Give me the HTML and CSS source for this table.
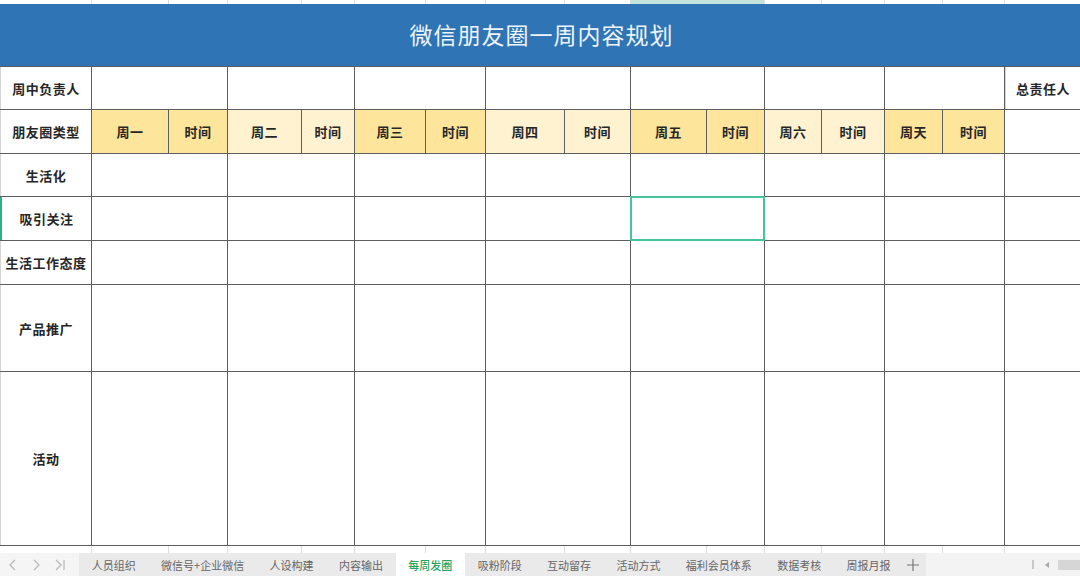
FILE: index.html
```html
<!DOCTYPE html>
<html lang="zh">
<head>
<meta charset="utf-8">
<title>微信朋友圈一周内容规划</title>
<link rel="stylesheet" href="styles.css">
</head>
<body>
<div class="sheet">
  <div class="strip top">
    <span></span><span></span><span></span><span></span><span></span><span></span><span></span><span></span><span></span><span class="hl"></span><span></span><span></span><span></span><span></span><span></span>
  </div>
  <div class="title">微信朋友圈一周内容规划</div>
  <div class="grid">
    <div class="c label r1">周中负责人</div>
    <div class="c span"></div><div class="c span"></div><div class="c span"></div><div class="c span"></div><div class="c span"></div><div class="c span"></div><div class="c span"></div>
    <div class="c label">总责任人</div>

    <div class="c label">朋友圈类型</div>
    <div class="c day odd">周一</div><div class="c day odd">时间</div>
    <div class="c day even">周二</div><div class="c day even">时间</div>
    <div class="c day odd">周三</div><div class="c day odd">时间</div>
    <div class="c day even">周四</div><div class="c day even">时间</div>
    <div class="c day odd">周五</div><div class="c day odd">时间</div>
    <div class="c day even">周六</div><div class="c day even">时间</div>
    <div class="c day odd">周天</div><div class="c day odd">时间</div>
    <div class="c"></div>

    <div class="c label">生活化</div>
    <div class="c span"></div><div class="c span"></div><div class="c span"></div><div class="c span"></div><div class="c span"></div><div class="c span"></div><div class="c span"></div>
    <div class="c"></div>

    <div class="c label active">吸引关注</div>
    <div class="c span"></div><div class="c span"></div><div class="c span"></div><div class="c span"></div><div class="c span selected"></div><div class="c span"></div><div class="c span"></div>
    <div class="c"></div>

    <div class="c label">生活工作态度</div>
    <div class="c span"></div><div class="c span"></div><div class="c span"></div><div class="c span"></div><div class="c span"></div><div class="c span"></div><div class="c span"></div>
    <div class="c"></div>

    <div class="c label">产品推广</div>
    <div class="c span"></div><div class="c span"></div><div class="c span"></div><div class="c span"></div><div class="c span"></div><div class="c span"></div><div class="c span"></div>
    <div class="c"></div>

    <div class="c label">活动</div>
    <div class="c span"></div><div class="c span"></div><div class="c span"></div><div class="c span"></div><div class="c span"></div><div class="c span"></div><div class="c span"></div>
    <div class="c"></div>
  </div>
  <div class="strip bottom">
    <span></span><span></span><span></span><span></span><span></span><span></span><span></span><span></span><span></span><span></span><span></span><span></span><span></span><span></span><span></span><span></span>
  </div>
  <div class="tabbar">
    <div class="nav">
      <svg width="10" height="12" viewBox="0 0 10 12"><path d="M7 1 L2 6 L7 11" fill="none" stroke="#b8b8b8" stroke-width="1.2"/></svg>
      <svg width="10" height="12" viewBox="0 0 10 12"><path d="M3 1 L8 6 L3 11" fill="none" stroke="#b8b8b8" stroke-width="1.2"/></svg>
      <svg width="12" height="12" viewBox="0 0 12 12"><path d="M2 1 L7 6 L2 11 M10 1 V11" fill="none" stroke="#b8b8b8" stroke-width="1.2"/></svg>
    </div>
    <div class="tabs">
      <span class="tab">人员组织</span>
      <span class="tab">微信号+企业微信</span>
      <span class="tab">人设构建</span>
      <span class="tab">内容输出</span>
      <span class="tab current">每周发圈</span>
      <span class="tab">吸粉阶段</span>
      <span class="tab">互动留存</span>
      <span class="tab">活动方式</span>
      <span class="tab">福利会员体系</span>
      <span class="tab">数据考核</span>
      <span class="tab">周报月报</span>
      <span class="add">
        <svg width="14" height="14" viewBox="0 0 14 14"><path d="M7 1 V13 M1 7 H13" stroke="#777" stroke-width="1.2"/></svg>
      </span>
    </div>
    <div class="scroll">
      <span class="split"></span>
      <svg width="6" height="8" viewBox="0 0 6 8"><path d="M5 1 L1 4 L5 7 Z" fill="#a8a8a8"/></svg>
      <span class="thumb"></span>
    </div>
  </div>
</div>
</body>
</html>
```

FILE: styles.css
```css
:root {
  --cols: 91px 76px 58px 73px 52px 70px 59px 78px 65px 75px 57px 56px 62px 57px 61px 1fr;
  --line: #5e5e5e;
}

* { box-sizing: border-box; }

html, body {
  margin: 0;
  padding: 0;
  background: #fff;
}

body {
  width: 1080px;
  height: 576px;
  overflow: hidden;
  font-family: "Noto Sans CJK SC", "Noto Sans", sans-serif;
}

.sheet {
  display: flex;
  flex-direction: column;
  height: 576px;
}

.strip {
  display: grid;
  grid-template-columns: var(--cols);
  column-gap: 1px;
  background: #dcdcdc;
}

.strip span { background: #fff; }

.strip.top { height: 4px; }
.strip.top span.hl {
  grid-column: span 2;
  background: #c3e4dc;
}

.strip.bottom { height: 7px; }

.title {
  height: 62px;
  background: #2f74b5;
  color: #eef4fb;
  font-size: 23px;
  letter-spacing: 1px;
  display: flex;
  align-items: center;
  justify-content: center;
  padding-left: 3px;
  padding-bottom: 2px;
}

.grid {
  display: grid;
  grid-template-columns: var(--cols);
  grid-template-rows: 42px 43px 42px 43px 43px 86px 173px;
  gap: 1px;
  padding: 1px 0;
  background: var(--line);
}

.c {
  background: #fff;
  display: flex;
  align-items: center;
  justify-content: center;
  font-size: 13px;
  font-weight: 700;
  color: #262626;
  letter-spacing: 0.5px;
}

.span { grid-column: span 2; }

.label {
  border-left: 1px solid #d4d4d4;
}

.label.active {
  border-left: 2px solid #2bb083;
}

.day.odd { background: #fee59c; }
.day.even { background: #fff2d0; }

.selected {
  position: relative;
  z-index: 1;
  outline: 2px solid #47c39b;
  outline-offset: -1px;
}

.tabbar {
  height: 23px;
  display: flex;
  background: #f3f3f3;
  font-size: 11px;
  color: #666;
}

.nav {
  width: 79px;
  display: flex;
  align-items: center;
  gap: 13px;
  padding-left: 8px;
  background: #f5f5f5;
}

.tabs {
  display: flex;
  align-items: stretch;
  background: #eaeaea;
}

.tab {
  display: flex;
  align-items: center;
  padding: 0 12.7px;
  white-space: nowrap;
}

.tab.current {
  background: #fff;
  color: #1fa463;
  font-weight: 500;
}

.add {
  display: flex;
  align-items: center;
  padding: 0 6px 0 3px;
}

.scroll {
  flex: 1;
  display: flex;
  align-items: center;
  justify-content: flex-end;
  gap: 8px;
}

.split {
  width: 2px;
  height: 9px;
  border-left: 1px solid #c8c8c8;
  border-right: 1px solid #c8c8c8;
  margin-right: 2px;
}

.thumb {
  width: 22px;
  height: 10px;
  background: #d6d6d6;
}
```
